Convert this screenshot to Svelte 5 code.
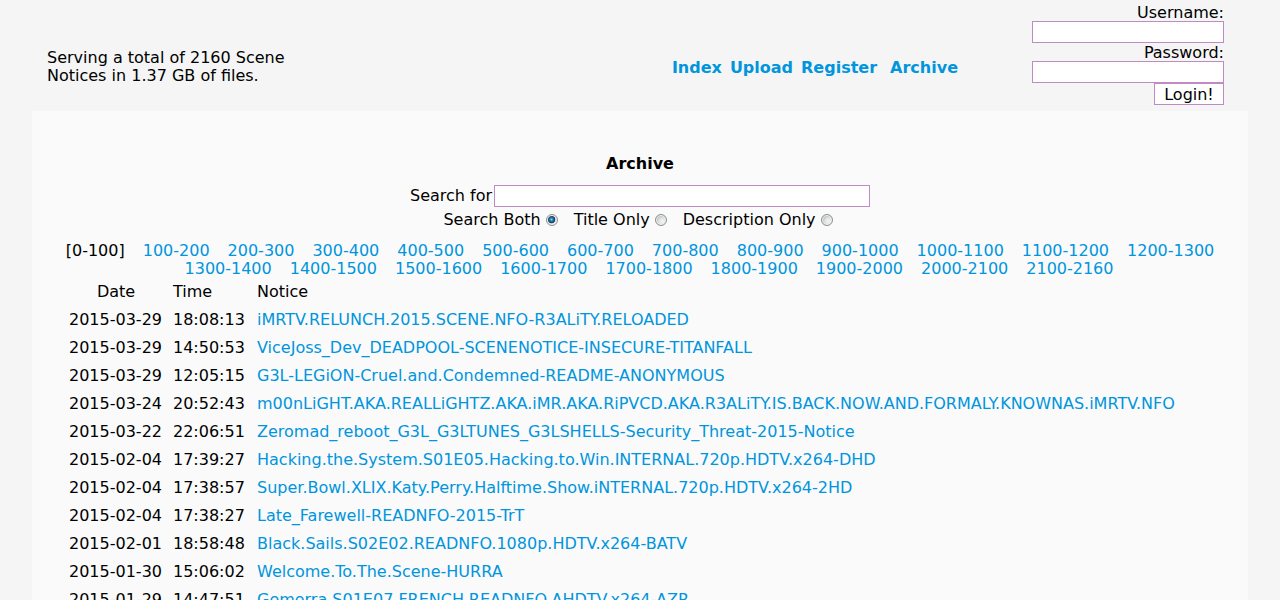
<script>
  const nav = ['Index', 'Upload', 'Register', 'Archive'];

  const total = 2160;
  const pages = [];
  for (let from = 0; from < total; from += 100) {
    pages.push(`${from}-${Math.min(from + 100, total)}`);
  }

  const notices = [
    ['2015-03-29', '18:08:13', 'iMRTV.RELUNCH.2015.SCENE.NFO-R3ALiTY.RELOADED'],
    ['2015-03-29', '14:50:53', 'ViceJoss_Dev_DEADPOOL-SCENENOTICE-INSECURE-TITANFALL'],
    ['2015-03-29', '12:05:15', 'G3L-LEGiON-Cruel.and.Condemned-README-ANONYMOUS'],
    ['2015-03-24', '20:52:43', 'm00nLiGHT.AKA.REALLiGHTZ.AKA.iMR.AKA.RiPVCD.AKA.R3ALiTY.IS.BACK.NOW.AND.FORMALY.KNOWNAS.iMRTV.NFO'],
    ['2015-03-22', '22:06:51', 'Zeromad_reboot_G3L_G3LTUNES_G3LSHELLS-Security_Threat-2015-Notice'],
    ['2015-02-04', '17:39:27', 'Hacking.the.System.S01E05.Hacking.to.Win.INTERNAL.720p.HDTV.x264-DHD'],
    ['2015-02-04', '17:38:57', 'Super.Bowl.XLIX.Katy.Perry.Halftime.Show.iNTERNAL.720p.HDTV.x264-2HD'],
    ['2015-02-04', '17:38:27', 'Late_Farewell-READNFO-2015-TrT'],
    ['2015-02-01', '18:58:48', 'Black.Sails.S02E02.READNFO.1080p.HDTV.x264-BATV'],
    ['2015-01-30', '15:06:02', 'Welcome.To.The.Scene-HURRA'],
    ['2015-01-29', '14:47:51', 'Gomorra.S01E07.FRENCH.READNFO.AHDTV.x264-AZR']
  ];

  let scope = 'both';
</script>

<div class="page">
  <header>
    <p class="stats">Serving a total of 2160 Scene Notices in 1.37 GB of files.</p>
    <nav>
      {#each nav as item}
        <a href="#{item.toLowerCase()}">{item}</a>
      {/each}
    </nav>
    <form class="login" on:submit|preventDefault>
      <label for="username">Username:</label>
      <input id="username" type="text" />
      <label for="password">Password:</label>
      <input id="password" type="password" />
      <button type="submit">Login!</button>
    </form>
  </header>

  <main>
    <h1>Archive</h1>
    <form class="search" on:submit|preventDefault>
      <div class="query">
        <label for="query">Search for</label>
        <input id="query" type="text" />
      </div>
      <div class="scopes">
        <label>Search Both<input type="radio" name="scope" value="both" bind:group={scope} /></label>
        <label>Title Only<input type="radio" name="scope" value="title" bind:group={scope} /></label>
        <label>Description Only<input type="radio" name="scope" value="description" bind:group={scope} /></label>
      </div>
    </form>

    <div class="pager">
      {#each pages as page, i}
        {#if i === 0}
          <span>[{page}]</span>
        {:else}
          <a href="#page-{i}">{page}</a>
        {/if}
      {/each}
    </div>

    <div class="list">
      <table>
        <thead>
          <tr><th class="date">Date</th><th class="time">Time</th><th>Notice</th></tr>
        </thead>
        <tbody>
          {#each notices as [date, time, title]}
            <tr>
              <td>{date}</td>
              <td>{time}</td>
              <td><a href="#{title}">{title}</a></td>
            </tr>
          {/each}
        </tbody>
      </table>
    </div>
  </main>
</div>

<style>
  :global(body) {
    margin: 0;
    background: #f5f5f5;
  }

  :global(html) {
    scrollbar-width: none;
  }

  .page {
    font: 16px/18px Verdana, "DejaVu Sans", sans-serif;
    color: #000;
    padding: 0 32px;
  }

  a {
    color: #0095dd;
    text-decoration: none;
  }

  input,
  button {
    box-sizing: border-box;
    margin: 0;
    height: 22px;
    border: 1px solid #c08ac4;
    border-radius: 0;
    background: #fff;
    color: #000;
    font: inherit;
  }

  header {
    display: grid;
    grid-template-columns: 264px 1fr 192px;
    align-items: center;
    padding: 3px 24px 6px 15px;
  }

  .stats {
    margin: 26px 0 0;
  }

  nav {
    display: flex;
    justify-content: flex-end;
    gap: 8px;
    margin: 28px 74px 0 0;
    font-weight: bold;
  }

  nav a:last-child {
    margin-left: 5px;
  }

  .login {
    display: flex;
    flex-direction: column;
    align-items: flex-end;
  }

  .login label {
    height: 18px;
    line-height: 20px;
  }

  .login input {
    width: 100%;
  }

  .login button {
    width: 70px;
    padding: 1px 0 0;
  }

  main {
    background: #fafafa;
    padding: 44px 32px 0;
  }

  h1 {
    margin: 0 0 12px;
    font-size: 16px;
    line-height: 18px;
    text-align: center;
  }

  .query,
  .scopes {
    display: flex;
    justify-content: center;
    align-items: center;
  }

  .query {
    gap: 2px;
  }

  .query label {
    line-height: 20px;
  }

  .query input {
    width: 376px;
  }

  .scopes {
    gap: 16px;
    padding: 4px 4px 13px 0;
  }

  .scopes label {
    display: flex;
    align-items: center;
    gap: 5px;
  }

  .scopes input {
    appearance: none;
    width: 12px;
    height: 12px;
    border: 1px solid #8e8f8f;
    border-radius: 50%;
    background: radial-gradient(circle at 65% 65%, #f4f4f4 0, #dfe1e3 40%, #c3c6c9 60%);
    box-shadow: inset 0 0 0 1px #f2f2f2;
  }

  .scopes input:checked {
    background: radial-gradient(circle at 45% 45%, #8fd8f5 0, #2580b0 20%, #123e5c 44%, #e3e6e8 54%);
  }

  .pager {
    display: flex;
    flex-wrap: wrap;
    justify-content: center;
  }

  .pager a {
    margin-left: 18px;
  }

  .list {
    overflow: hidden;
  }

  table {
    border-collapse: collapse;
  }

  th,
  td {
    padding: 5px;
    font-weight: normal;
    text-align: left;
    white-space: nowrap;
  }

  th.date {
    min-width: 94px;
    text-align: center;
  }

  th.time {
    min-width: 74px;
  }
</style>
